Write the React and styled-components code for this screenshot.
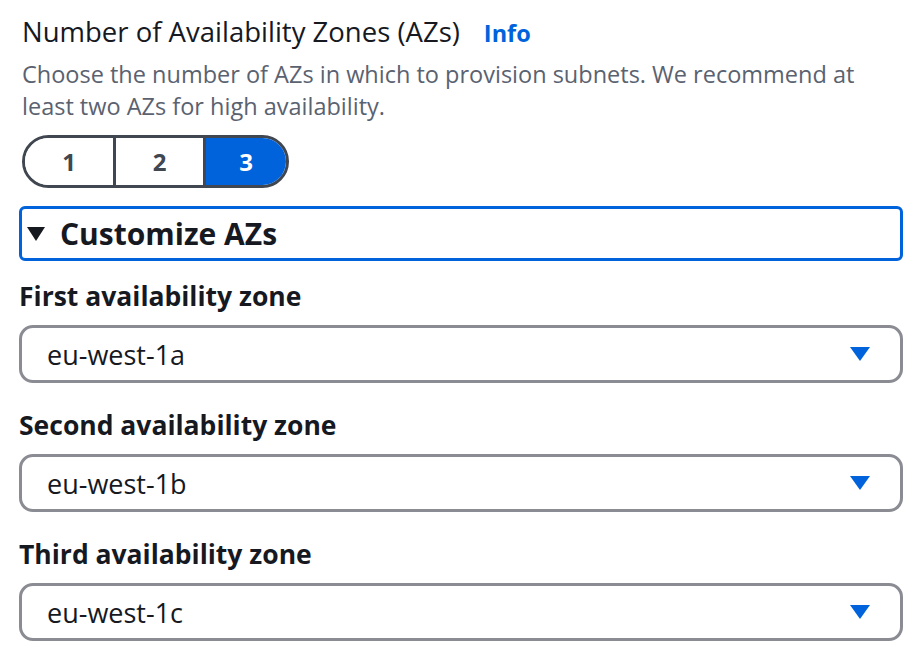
import { createGlobalStyle, styled } from 'styled-components';

const GlobalStyle = createGlobalStyle`
  body {
    margin: 0;
    background: #fff;
    font-family: "Open Sans", "Noto Sans", sans-serif;
    color: #16191f;
  }
`;

const zones = [
  { label: 'First availability zone', value: 'eu-west-1a' },
  { label: 'Second availability zone', value: 'eu-west-1b' },
  { label: 'Third availability zone', value: 'eu-west-1c' },
];

const segmentWidths = { 1: 88, 2: 87, 3: 80 };

const App = () => (
  <>
    <GlobalStyle />
    <Page>
      <Header>
        <Title>Number of Availability Zones (AZs)</Title>
        <InfoLink>Info</InfoLink>
      </Header>
      <Description>
        Choose the number of AZs in which to provision subnets. We recommend at
        <br />
        least two AZs for high availability.
      </Description>
      <Segmented>
        {[1, 2, 3].map((n) => (
          <Segment key={n} $width={segmentWidths[n]} $selected={n === 3}>
            {n}
          </Segment>
        ))}
      </Segmented>
      <Expander>
        <Caret viewBox="0 0 18 14">
          <path d="M0 0 H18 L9 14 Z" fill="#16191f" />
        </Caret>
        <ExpanderTitle>Customize AZs</ExpanderTitle>
      </Expander>
      {zones.map((zone) => (
        <Field key={zone.label}>
          <FieldLabel>{zone.label}</FieldLabel>
          <Select>
            <SelectValue>{zone.value}</SelectValue>
            <SelectCaret viewBox="0 0 20 14">
              <path d="M0 0 H20 L10 14 Z" fill="#0063db" />
            </SelectCaret>
          </Select>
        </Field>
      ))}
    </Page>
  </>
);

const Page = styled.div`
  width: 884px;
  padding: 15px 0 0 19px;
  display: flex;
  flex-direction: column;
`;

const Header = styled.div`
  display: flex;
  align-items: baseline;
  gap: 24px;
  padding-left: 3px;
`;

const Title = styled.span`
  font-size: 27.5px;
  font-weight: 500;
  line-height: 34px;
  color: #16191f;
`;

const InfoLink = styled.span`
  font-size: 23.5px;
  font-weight: 700;
  color: #0063db;
`;

const Description = styled.p`
  margin: 9px 0 0;
  padding-left: 3px;
  font-size: 23.5px;
  line-height: 32px;
  color: #5a6270;
  white-space: nowrap;
`;

const Segmented = styled.div`
  display: flex;
  align-self: flex-start;
  margin: 13px 0 0 3px;
  border: 3px solid #414750;
  border-radius: 27px;
  overflow: hidden;
  height: 47px;
`;

const Segment = styled.div`
  width: ${(p) => p.$width}px;
  display: flex;
  align-items: center;
  justify-content: center;
  font-size: 24px;
  font-weight: 700;
  color: ${(p) => (p.$selected ? '#fff' : '#414750')};
  background: ${(p) => (p.$selected ? '#0063db' : '#fff')};
  & + & {
    border-left: 3px solid #414750;
  }
`;

const Expander = styled.div`
  margin-top: 18px;
  height: 49px;
  border: 3px solid #0063db;
  border-radius: 6px;
  display: flex;
  align-items: center;
  gap: 15px;
  padding-left: 5px;
`;

const Caret = styled.svg`
  width: 18px;
  height: 14px;
`;

const ExpanderTitle = styled.span`
  font-size: 30px;
  font-weight: 700;
  color: #16191f;
`;

const Field = styled.div`
  display: flex;
  flex-direction: column;
  margin-top: 17px;
  & + & {
    margin-top: 24px;
  }
`;

const FieldLabel = styled.div`
  font-size: 26.5px;
  font-weight: 700;
  line-height: 36px;
  color: #16191f;
`;

const Select = styled.div`
  margin-top: 11px;
  height: 52px;
  border: 3px solid #8b8c93;
  border-radius: 14px;
  display: flex;
  align-items: center;
  justify-content: space-between;
  padding: 0 30px 0 25px;
`;

const SelectValue = styled.span`
  font-size: 27px;
  color: #16191f;
`;

const SelectCaret = styled.svg`
  width: 20px;
  height: 14px;
`;

export default App;
